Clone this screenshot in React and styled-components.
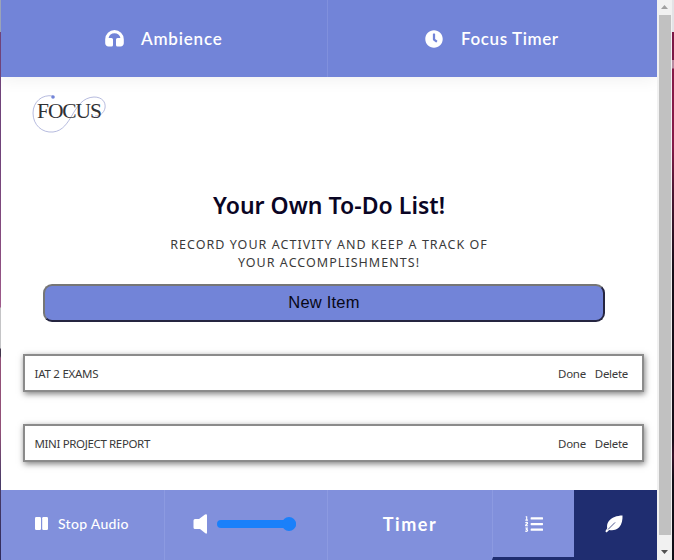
import React from "react";
import styled, { createGlobalStyle } from "styled-components";
import { FaClock, FaListOl } from "react-icons/fa";

const GlobalStyle = createGlobalStyle`
  * { box-sizing: border-box; }
  body { margin: 0; overflow: hidden; background: #fff; }
`;

const Window = styled.div`
  display: grid;
  grid-template-columns: 1px 656px 15px 2px;
  width: 674px;
  height: 560px;
  overflow: hidden;
  font-family: "Noto Sans", sans-serif;
`;

const LeftEdge = styled.div`
  background: linear-gradient(#9aa3b8 0 32px, #70437a 32px 150px, #8b4d80 260px, #a05c8c 307px, #c4c4c6 308px 348px, #42364c 349px 356px, #925078 358px 430px, #4b3c68 480px, #302b5c);
`;

const RightEdge = styled.div`
  background: linear-gradient(#e3e3e6 0 32px, #7c1745 32px 60px, #b98aa0 60px 68px, #861a48 69px 145px, #4d1632 190px, #160d18 270px 440px, #391128 455px, #100d16 480px);
`;

const Page = styled.div`
  display: flex;
  flex-direction: column;
  min-width: 0;
`;

const TopBar = styled.header`
  display: grid;
  grid-template-columns: 326px 330px;
  height: 77px;
  flex: none;
  background: #7284d8;
  box-shadow: 0 3px 16px rgba(0, 0, 0, 0.06);
  clip-path: inset(0 0 -30px 0);
`;

const TopTab = styled.div`
  display: flex;
  align-items: center;
  padding-left: ${(p) => p.$inset}px;
  gap: ${(p) => p.$gap}px;
  border-left: ${(p) => (p.$divided ? "1px solid #8090dd" : "none")};
  color: #fff;
  svg { flex: none; }
`;

const TabLabel = styled.span`
  font: 600 17px/24px "Lato", sans-serif;
  letter-spacing: ${(p) => p.$track}px;
`;

const Content = styled.main`
  flex: 1;
  display: flex;
  flex-direction: column;
  min-height: 0;
`;

const Logo = styled.svg`
  width: 80px;
  height: 42px;
  margin: 15px 0 0 28px;
  flex: none;
`;

const Title = styled.h1`
  margin: 55px 0 0;
  text-align: center;
  color: #0a0524;
  font: 600 23px/32px "Noto Sans", sans-serif;
  letter-spacing: 0.03px;
`;

const Subtitle = styled.p`
  width: 350px;
  margin: 15px auto 0;
  text-align: center;
  color: #3a3a3a;
  font: 400 12.5px/18px "Noto Sans", sans-serif;
  letter-spacing: 1.04px;
`;

const NewItem = styled.button`
  width: 562px;
  height: 38px;
  flex: none;
  margin: 12px 0 0 42px;
  padding: 0 0 2px;
  border: 2px solid;
  border-color: #767676 #252540 #252540 #767676;
  border-radius: 9px;
  background: #7284d8;
  color: #080816;
  font: 16.5px "Liberation Sans", Arial, sans-serif;
  letter-spacing: 0.2px;
`;

const List = styled.ul`
  display: grid;
  gap: 32px;
  margin: 32px 0 0 22px;
  padding: 0;
  width: 621px;
  list-style: none;
`;

const Item = styled.li`
  display: flex;
  align-items: center;
  height: 38px;
  padding: 2px 14px 0 9.5px;
  border: 2px solid #8b8b8b;
  background: #fff;
  box-shadow: 1px 2px 6px rgba(0, 0, 0, 0.5);
  color: #3a3a3a;
  font: 400 11.5px/18px "Noto Sans", sans-serif;
`;

const ItemName = styled.span`
  flex: 1;
  letter-spacing: ${(p) => p.$track}px;
`;

const Action = styled.span`
  margin-left: 9px;
  letter-spacing: -0.3px;
`;

const BottomBar = styled.footer`
  display: grid;
  grid-template-columns: 163px 163px 165px 82px 83px;
  height: 70px;
  flex: none;
  background: #8190dc;
  color: #fff;
`;

const Cell = styled.div`
  display: flex;
  align-items: center;
  justify-content: ${(p) => (p.$inset ? "flex-start" : "center")};
  padding: 0 ${(p) => p.$end || 0}px ${(p) => (p.$active ? 0 : 3)}px ${(p) => p.$inset || 0}px;
  gap: ${(p) => p.$gap || 0}px;
  border-left: ${(p) => (p.$divided ? "1px solid #8c9ae1" : "none")};
  border-bottom: ${(p) => (p.$active ? "3px solid #1f2d70" : "none")};
  background: ${(p) => (p.$dark ? "#1f2d70" : "transparent")};
`;

const AudioLabel = styled.span`
  font: 500 14px/20px Lato, sans-serif;
  letter-spacing: 0.3px;
`;

const TimerLabel = styled.span`
  font: 700 18px/24px Lato, sans-serif;
  letter-spacing: 1.6px;
`;

const Track = styled.div`
  display: flex;
  align-items: center;
  justify-content: flex-end;
  width: 79px;
  height: 8px;
  border-radius: 4px;
  background: #1a80fa;
`;

const Thumb = styled.div`
  width: 14px;
  height: 14px;
  flex: none;
  border-radius: 50%;
  background: #1a80fa;
`;

const Scrollbar = styled.div`
  display: flex;
  flex-direction: column;
  align-items: center;
  background: #f1f1f1;
`;

const ScrollArrow = styled.svg`
  width: 15px;
  height: ${(p) => p.$h}px;
  flex: none;
`;

const ScrollThumb = styled.div`
  width: 12px;
  flex: 1;
  margin-left: 1px;
  background: #c1c1c1;
`;

const HeadphonesIcon = () => (
  <svg width="19" height="17" viewBox="0 0 19 17" fill="currentColor">
    <path d="M9.500 0A9.300 9.300 0 0 0 .2 9.300v4Q.4 16.300 3.500 16.500H6.500Q8 16.500 8 15V9.500Q8 8 6.500 8H3.600C4 5 6.500 3.200 9.500 3.200S15 5 15.400 8H12.500Q11 8 11 9.500V15Q11 16.500 12.500 16.500h3q3.100-.2 3.300-3.200v-4A9.300 9.300 0 0 0 9.500 0z" />
  </svg>
);

const LeafIcon = () => (
  <svg width="18" height="18" viewBox="0 0 18 18">
    <path
      d="M17.500.5C12 .6 6.500 2.500 3.700 6.200 2 8.500 1.800 11 2.200 13.200L.3 16.300l1.300 1.200 2.600-2.600c3.500.7 7.600.1 10-2.600C17 9.200 17.700 4.500 17.500.5z"
      fill="#fff"
    />
    <path d="M3.300 14.200 9.800 7.700" stroke="#1f2d70" strokeWidth=".8" strokeLinecap="round" />
  </svg>
);

const items = [
  { name: "IAT 2 EXAMS", track: -0.25 },
  { name: "MINI PROJECT REPORT", track: -0.36 },
];

export default function App() {
  return (
    <Window>
      <GlobalStyle />
      <LeftEdge />
      <Page>
        <TopBar>
          <TopTab $inset={104} $gap={17}>
            <HeadphonesIcon />
            <TabLabel $track={0.8}>Ambience</TabLabel>
          </TopTab>
          <TopTab $inset={97} $gap={18} $divided>
            <FaClock size={18} />
            <TabLabel $track={0.6}>Focus Timer</TabLabel>
          </TopTab>
        </TopBar>
        <Content>
          <Logo viewBox="0 0 80 42" role="img" aria-label="Focus">
            <path
              d="M24 4C13 2 4 10 4 21c0 12 9 20 20 19C44 38 43 6 65 5c8 0 12 5 11 11-1 5-5 8-10 8"
              fill="none"
              stroke="#a3a9d5"
              strokeWidth=".8"
            />
            <circle cx="24" cy="5" r="1.8" fill="#7284d8" />
            <text x="8" y="26" textLength="65" fontFamily="Liberation Serif, serif" fontSize="21.5" fill="#303034">
              FOCUS
            </text>
          </Logo>
          <Title>Your Own To-Do List!</Title>
          <Subtitle>
            RECORD YOUR ACTIVITY AND KEEP A TRACK OF
            <br />
            YOUR ACCOMPLISHMENTS!
          </Subtitle>
          <NewItem>New Item</NewItem>
          <List>
            {items.map((item) => (
              <Item key={item.name}>
                <ItemName $track={item.track}>{item.name}</ItemName>
                <Action>Done</Action>
                <Action>Delete</Action>
              </Item>
            ))}
          </List>
        </Content>
        <BottomBar>
          <Cell $inset={34} $gap={10}>
            <svg width="13" height="13" viewBox="0 0 13 13" fill="currentColor">
              <rect width="6" height="13" rx="1.2" />
              <rect x="7.2" width="5.8" height="13" rx="1.2" />
            </svg>
            <AudioLabel>Stop Audio</AudioLabel>
          </Cell>
          <Cell $inset={28} $gap={9} $divided>
            <svg width="15" height="20" viewBox="0 0 15 20" fill="currentColor">
              <path d="M2 5h4l6-4.5Q14-.5 14 1.500v17q0 2-2 .500L7 15H2Q.5 15 .5 13.500v-7Q.5 5 2 5z" />
            </svg>
            <Track>
              <Thumb />
            </Track>
          </Cell>
          <Cell $divided>
            <TimerLabel>Timer</TimerLabel>
          </Cell>
          <Cell $divided $active>
            <FaListOl size={18} />
          </Cell>
          <Cell $dark $end={3}>
            <LeafIcon />
          </Cell>
        </BottomBar>
      </Page>
      <Scrollbar>
        <ScrollArrow $h={15} viewBox="0 0 15 15">
          <path d="M4 9h7L7.500 5z" fill="#a0a0a0" />
        </ScrollArrow>
        <ScrollThumb />
        <ScrollArrow $h={25} viewBox="0 0 15 25">
          <path d="M4 15h7l-3.500 4z" fill="#505050" />
        </ScrollArrow>
      </Scrollbar>
      <RightEdge />
    </Window>
  );
}
